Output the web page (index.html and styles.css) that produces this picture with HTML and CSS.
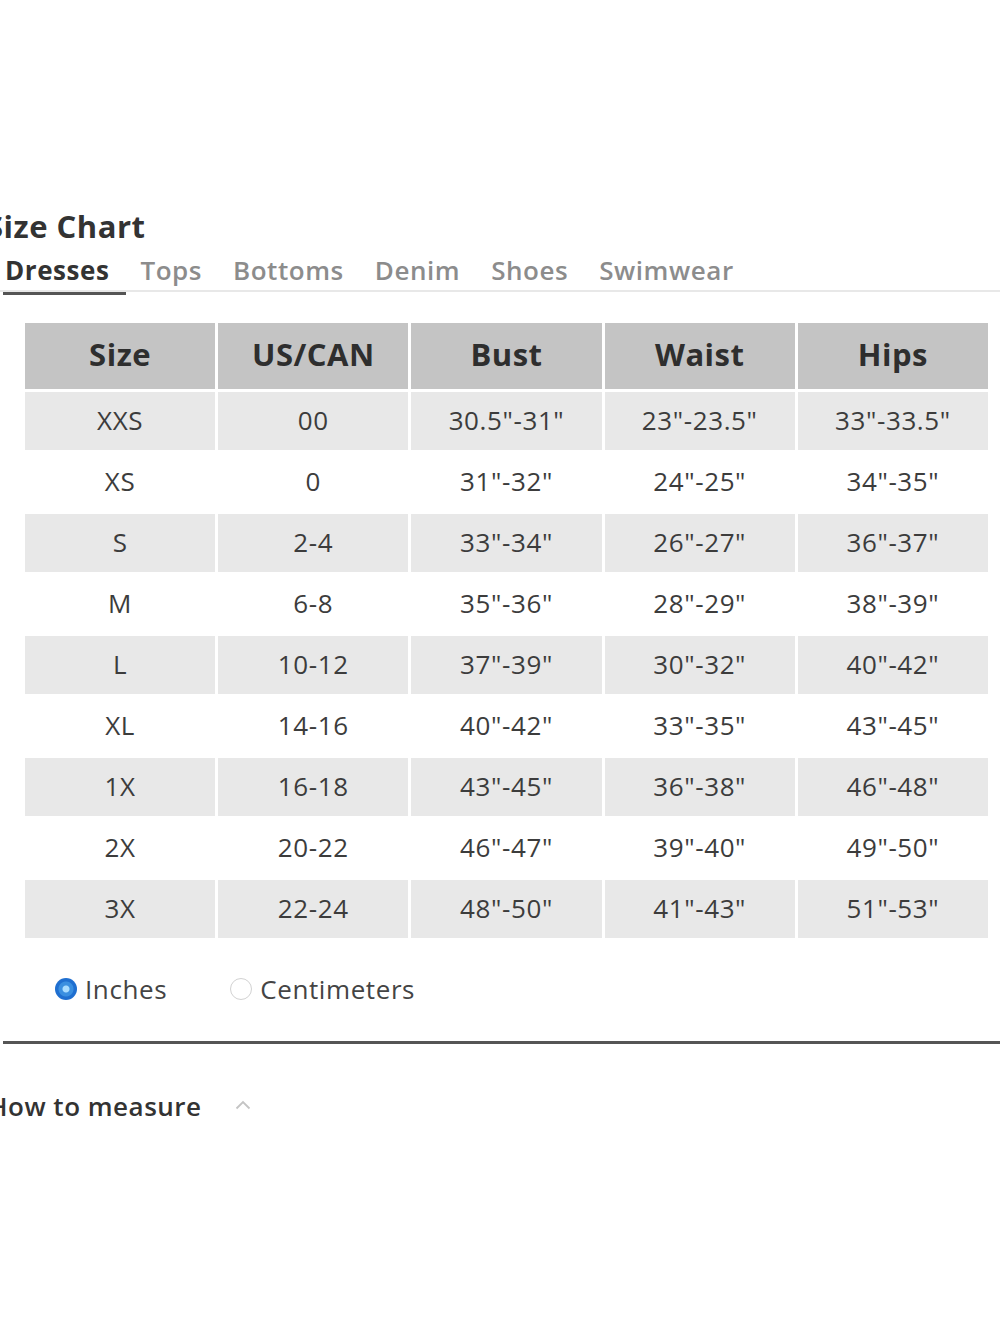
FILE: index.html
```html
<!DOCTYPE html>
<html>
<head>
<meta charset="utf-8">
<link rel="stylesheet" href="styles.css">
</head>
<body>
<div class="page">
  <h1 class="title">Size Chart</h1>
  <nav class="tabs">
    <span class="tab active">Dresses</span>
    <span class="tab">Tops</span>
    <span class="tab">Bottoms</span>
    <span class="tab">Denim</span>
    <span class="tab">Shoes</span>
    <span class="tab">Swimwear</span>
  </nav>
  <div class="table">
    <div class="th">Size</div><div class="th">US/CAN</div><div class="th">Bust</div><div class="th">Waist</div><div class="th">Hips</div>
    <div class="td g">XXS</div><div class="td g">00</div><div class="td g">30.5"-31"</div><div class="td g">23"-23.5"</div><div class="td g">33"-33.5"</div>
    <div class="td">XS</div><div class="td">0</div><div class="td">31"-32"</div><div class="td">24"-25"</div><div class="td">34"-35"</div>
    <div class="td g">S</div><div class="td g">2-4</div><div class="td g">33"-34"</div><div class="td g">26"-27"</div><div class="td g">36"-37"</div>
    <div class="td">M</div><div class="td">6-8</div><div class="td">35"-36"</div><div class="td">28"-29"</div><div class="td">38"-39"</div>
    <div class="td g">L</div><div class="td g">10-12</div><div class="td g">37"-39"</div><div class="td g">30"-32"</div><div class="td g">40"-42"</div>
    <div class="td">XL</div><div class="td">14-16</div><div class="td">40"-42"</div><div class="td">33"-35"</div><div class="td">43"-45"</div>
    <div class="td g">1X</div><div class="td g">16-18</div><div class="td g">43"-45"</div><div class="td g">36"-38"</div><div class="td g">46"-48"</div>
    <div class="td">2X</div><div class="td">20-22</div><div class="td">46"-47"</div><div class="td">39"-40"</div><div class="td">49"-50"</div>
    <div class="td g">3X</div><div class="td g">22-24</div><div class="td g">48"-50"</div><div class="td g">41"-43"</div><div class="td g">51"-53"</div>
  </div>
  <div class="units">
    <label class="unit"><span class="radio on"></span>Inches</label>
    <label class="unit"><span class="radio"></span>Centimeters</label>
  </div>
  <div class="rule"></div>
  <div class="measure">
    <span>How to measure</span>
    <svg class="chev" width="16" height="10" viewBox="0 0 16 10"><polyline points="1.5,8.5 8,2 14.5,8.5" fill="none" stroke="#c4c4c4" stroke-width="1.8"/></svg>
  </div>
</div>
</body>
</html>
```
FILE: styles.css
```css
html, body {
  margin: 0;
  padding: 0;
  background: #fff;
}
body {
  font-family: "Open Sans", "Liberation Sans", sans-serif;
  width: 1000px;
  height: 1333px;
  overflow: hidden;
}
.page {
  padding-top: 206px;
}
.title {
  margin: 0 0 0 -14px;
  font-size: 31px;
  font-weight: 700;
  line-height: 40px;
  letter-spacing: 0.5px;
  color: #333;
}
.tabs {
  display: flex;
  gap: 31px;
  padding-left: 5px;
  margin-top: 7px;
  border-bottom: 2px solid #e8e8e8;
  height: 39px;
  box-sizing: border-box;
}
.tab {
  position: relative;
  font-size: 26px;
  font-weight: 600;
  line-height: 34px;
  letter-spacing: 0.55px;
  color: #8c8c8c;
}
.tab.active {
  color: #333;
  font-weight: 700;
}
.tab.active::after {
  content: "";
  position: absolute;
  left: -2px;
  right: -17px;
  bottom: -5px;
  height: 3px;
  background: #555;
}
.table {
  display: grid;
  grid-template-columns: repeat(5, 1fr);
  gap: 3px;
  width: 963px;
  margin: 31px 0 0 25px;
  grid-template-rows: 66px repeat(9, 58px);
}
.th {
  background: #c4c4c4;
  color: #2e2e2e;
  font-size: 31px;
  font-weight: 700;
  letter-spacing: 0.5px;
  display: flex;
  align-items: center;
  justify-content: center;
  padding-bottom: 4px;
  box-sizing: border-box;
}
.td {
  display: flex;
  align-items: center;
  justify-content: center;
  font-size: 26px;
  letter-spacing: 0.6px;
  color: #3c3c3c;
  background: #fff;
  padding-bottom: 3px;
  box-sizing: border-box;
}
.td.g {
  background: #e8e8e8;
}
.units {
  display: flex;
  gap: 63px;
  margin: 31px 0 0 55px;
  height: 40px;
  align-items: center;
}
.unit {
  display: flex;
  align-items: center;
  gap: 8px;
  font-size: 26px;
  letter-spacing: 0.6px;
  color: #444;
}
.radio {
  width: 22px;
  height: 22px;
  border-radius: 50%;
  border: 1.5px solid #d2d2d2;
  box-sizing: border-box;
  background: #fff;
}
.radio.on {
  border: none;
  background: radial-gradient(circle, #a8dcff 0 3px, #3a8fe0 4px 7px, #1f6fd0 8px);
}
.rule {
  margin: 32px 0 0 3px;
  height: 3px;
  background: #555;
}
.measure {
  display: flex;
  align-items: center;
  gap: 33px;
  margin: 44px 0 0 -12px;
  height: 36px;
  font-size: 26px;
  font-weight: 600;
  letter-spacing: 0.5px;
  color: #333;
}
.chev {
  display: block;
  margin-top: -2px;
}
```
